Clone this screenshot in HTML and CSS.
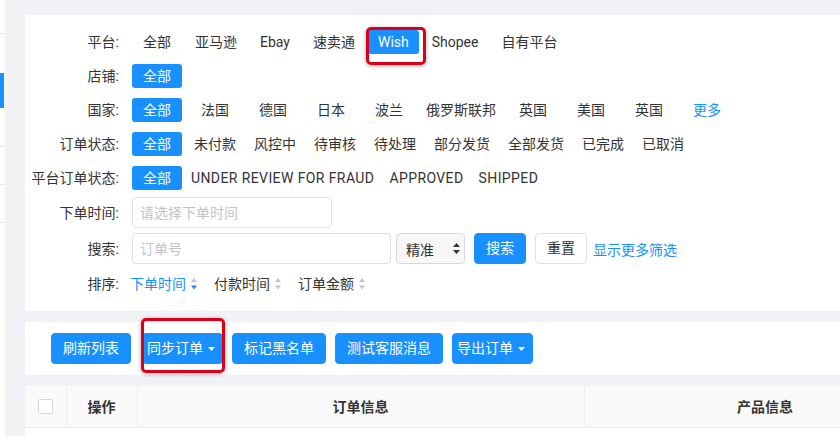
FILE: index.html
```html
<!DOCTYPE html>
<html>
<head>
    <meta charset="UTF-8">
    <title>订单列表</title>
    <link rel="stylesheet" href="styles.css">
</head>
<body>
<div class="page">
    <!-- 左侧菜单（只露出边缘） -->
    <aside class="sidebar">
        <div class="side-item top"></div>
        <div class="side-item group"><div class="side-active"></div></div>
        <div class="side-item"></div>
        <div class="side-item"></div>
    </aside>

    <main class="main">
        <!-- 筛选 -->
        <section class="card filter-card">
            <div class="row platform">
                <span class="label">平台:</span>
                <span class="opt all">全部</span>
                <span class="opt">亚马逊</span>
                <span class="opt">Ebay</span>
                <span class="opt">速卖通</span>
                <span class="opt active marked wish-mark">Wish</span>
                <span class="opt">Shopee</span>
                <span class="opt">自有平台</span>
            </div>
            <div class="row">
                <span class="label">店铺:</span>
                <span class="opt all active">全部</span>
            </div>
            <div class="row country">
                <span class="label">国家:</span>
                <span class="opt all active">全部</span>
                <span class="opt">法国</span>
                <span class="opt">德国</span>
                <span class="opt">日本</span>
                <span class="opt">波兰</span>
                <span class="opt">俄罗斯联邦</span>
                <span class="opt">英国</span>
                <span class="opt">美国</span>
                <span class="opt">英国</span>
                <span class="opt link">更多</span>
            </div>
            <div class="row status">
                <span class="label">订单状态:</span>
                <span class="opt all active">全部</span>
                <span class="opt">未付款</span>
                <span class="opt">风控中</span>
                <span class="opt">待审核</span>
                <span class="opt">待处理</span>
                <span class="opt">部分发货</span>
                <span class="opt">全部发货</span>
                <span class="opt">已完成</span>
                <span class="opt">已取消</span>
            </div>
            <div class="row pstatus">
                <span class="label">平台订单状态:</span>
                <span class="opt all active">全部</span>
                <span class="opt latin">UNDER REVIEW FOR FRAUD</span>
                <span class="opt latin">APPROVED</span>
                <span class="opt latin">SHIPPED</span>
            </div>
            <div class="row field">
                <span class="label">下单时间:</span>
                <input class="input" type="text" placeholder="请选择下单时间">
            </div>
            <div class="row field">
                <span class="label">搜索:</span>
                <input class="input wide" type="text" placeholder="订单号">
                <div class="select">
                    <span>精准</span>
                    <svg width="7" height="13" viewBox="0 0 7 13"><polygon points="0,5 3.5,1 7,5" fill="#333"/><polygon points="0,8 7,8 3.5,12" fill="#333"/></svg>
                </div>
                <button class="btn search-btn">搜索</button>
                <button class="btn plain reset-btn">重置</button>
                <span class="link more-link">显示更多筛选</span>
            </div>
            <div class="row sort">
                <span class="label">排序:</span>
                <span class="sort-item first active">下单时间
                    <svg class="sort-icon" width="6" height="14" viewBox="0 0 6 14"><polygon points="0,5 3,1 6,5" fill="#c0c4cc"/><polygon points="0,8.5 6,8.5 3,12.5" fill="#1890ff"/></svg>
                </span>
                <span class="sort-item">付款时间
                    <svg class="sort-icon" width="6" height="14" viewBox="0 0 6 14"><polygon points="0,5 3,1 6,5" fill="#c0c4cc"/><polygon points="0,8.5 6,8.5 3,12.5" fill="#c0c4cc"/></svg>
                </span>
                <span class="sort-item">订单金额
                    <svg class="sort-icon" width="6" height="14" viewBox="0 0 6 14"><polygon points="0,5 3,1 6,5" fill="#c0c4cc"/><polygon points="0,8.5 6,8.5 3,12.5" fill="#c0c4cc"/></svg>
                </span>
            </div>
        </section>

        <!-- 操作按钮 -->
        <section class="card toolbar">
            <button class="btn">刷新列表</button>
            <button class="btn dropdown marked sync-mark">同步订单<svg class="caret" width="7" height="4" viewBox="0 0 7 4"><polygon points="0,0 7,0 3.5,4" fill="#fff"/></svg></button>
            <button class="btn">标记黑名单</button>
            <button class="btn">测试客服消息</button>
            <button class="btn dropdown">导出订单<svg class="caret" width="7" height="4" viewBox="0 0 7 4"><polygon points="0,0 7,0 3.5,4" fill="#fff"/></svg></button>
        </section>

        <!-- 订单表格 -->
        <table class="order-table">
            <colgroup>
                <col class="c-check">
                <col class="c-op">
                <col class="c-order">
                <col class="c-product">
                <col>
            </colgroup>
            <thead>
                <tr>
                    <th><span class="checkbox"></span></th>
                    <th>操作</th>
                    <th>订单信息</th>
                    <th>产品信息</th>
                    <th>金额</th>
                </tr>
            </thead>
            <tbody>
                <tr><td></td><td></td><td></td><td></td><td></td></tr>
            </tbody>
        </table>
    </main>
</div>
</body>
</html>
```

FILE: styles.css
```css
*, *::before, *::after {
    box-sizing: border-box;
}
body {
    margin: 0;
    background-color: #f0f2f5;
    color: #333;
    font-family: Roboto, "Noto Sans CJK SC", sans-serif;
    font-size: 14px;
    overflow: hidden;
}
.page {
    display: flex;
    height: 436px;
}

/* sidebar edge */
.sidebar {
    flex: none;
    width: 5px;
    background-color: #fff;
}
.side-item {
    height: 38px;
    border-bottom: 1px solid #e8e8e8;
}
.side-item.top {
    height: 34px;
}
.side-item.group {
    height: 113px;
    padding-top: 39px;
}
.side-active {
    width: 4px;
    height: 35px;
    background-color: #1890ff;
}

.main {
    flex: none;
    width: 1100px;
    padding: 15px 0 0 20px;
}
.card {
    background-color: #fff;
}

/* filter card */
.filter-card {
    padding: 15px 0;
}
.row {
    display: flex;
    align-items: center;
    height: 24px;
    margin-bottom: 10px;
}
.label {
    flex: none;
    width: 107px;
    padding-right: 13px;
    text-align: right;
    line-height: 24px;
}
.opt {
    height: 24px;
    line-height: 24px;
    padding: 0 10px;
    margin-right: 3px;
    border-radius: 3px;
    white-space: nowrap;
    cursor: pointer;
}
.country .opt {
    min-width: 56px;
    text-align: center;
    padding: 0 7px;
    margin-right: 2px;
}
.status .opt {
    padding: 0 6px;
    margin-right: 6px;
}
.pstatus .opt {
    padding: 0 6px;
    margin-right: 3px;
}
.opt.latin {
    letter-spacing: 0.4px;
}
.opt.all {
    min-width: 0;
    padding: 0 11px;
}
.country .opt.all {
    margin-right: 5px;
}
.opt.active {
    background-color: #1890ff;
    color: #fff;
}
.link {
    color: #1890ff;
    cursor: pointer;
}
.row.pstatus {
    margin-bottom: 7px;
}
.row.field {
    height: 31px;
    margin-bottom: 5px;
}
.row.sort {
    margin: 8px 0 0;
}

.input {
    width: 200px;
    height: 31px;
    border: 1px solid #dcdfe6;
    border-radius: 4px;
    padding: 0 7px;
    font: inherit;
    color: #333;
    outline: none;
}
.input::placeholder {
    color: #c0c4cc;
}
.input.wide {
    width: 259px;
}
.select {
    display: flex;
    justify-content: space-between;
    align-items: center;
    width: 69px;
    height: 31px;
    margin-left: 5px;
    padding: 0 4px 0 9px;
    border: 1px solid #d9d9d9;
    border-radius: 4px;
    background-color: #f7f7f7;
}
.btn {
    height: 31px;
    padding: 0 11px;
    border: 1px solid #1890ff;
    border-radius: 4px;
    background-color: #1890ff;
    color: #fff;
    font: inherit;
    line-height: 29px;
    white-space: nowrap;
    cursor: pointer;
}
.btn.plain {
    background-color: #fff;
    border-color: #dcdfe6;
    color: #333;
}
.search-btn {
    margin-left: 9px;
}
.reset-btn {
    margin-left: 9px;
}
.more-link {
    margin-left: 6px;
}

.sort-item {
    display: flex;
    align-items: center;
    margin-right: 17px;
    line-height: 24px;
}
.sort-item.first {
    margin-left: -2px;
}
.sort-item.active {
    color: #1890ff;
}
.sort-icon {
    margin-left: 5px;
}

/* toolbar */
.toolbar {
    display: flex;
    margin-top: 11px;
    padding: 11px 26px;
}
.toolbar .btn {
    margin-right: 9px;
}
.toolbar .btn:first-child {
    margin-right: 11px;
}
.btn.dropdown {
    display: flex;
    align-items: center;
    padding: 0 7px 0 4px;
}
.caret {
    margin-left: 5px;
}

/* red annotation boxes */
.marked {
    position: relative;
}
.marked::after {
    content: "";
    position: absolute;
    border: 3px solid #d9001b;
    border-radius: 5px;
    box-shadow: 0 1px 4px rgba(0, 0, 0, 0.35);
}
.wish-mark::after {
    left: -2px;
    top: -3px;
    width: 60px;
    height: 38px;
}
.sync-mark::after {
    left: -2px;
    top: -16px;
    width: 84px;
    height: 55px;
}

/* table */
.order-table {
    margin-top: 11px;
    width: 1080px;
    border-collapse: collapse;
    table-layout: fixed;
    background-color: #fff;
}
.c-check { width: 41px; }
.c-op { width: 71px; }
.c-order { width: 447px; }
.c-product { width: 362px; }
.order-table th {
    height: 41px;
    padding: 0;
    background-color: #fafafa;
    border-right: 1px solid #ebeef5;
    border-bottom: 1px solid #ebeef5;
    font-weight: 600;
    text-align: center;
    color: #333;
}
.order-table td {
    height: 40px;
}
.checkbox {
    display: inline-block;
    width: 15px;
    height: 15px;
    margin-top: 4px;
    border: 1px solid #d9d9d9;
    border-radius: 2px;
    background-color: #fff;
}
```
